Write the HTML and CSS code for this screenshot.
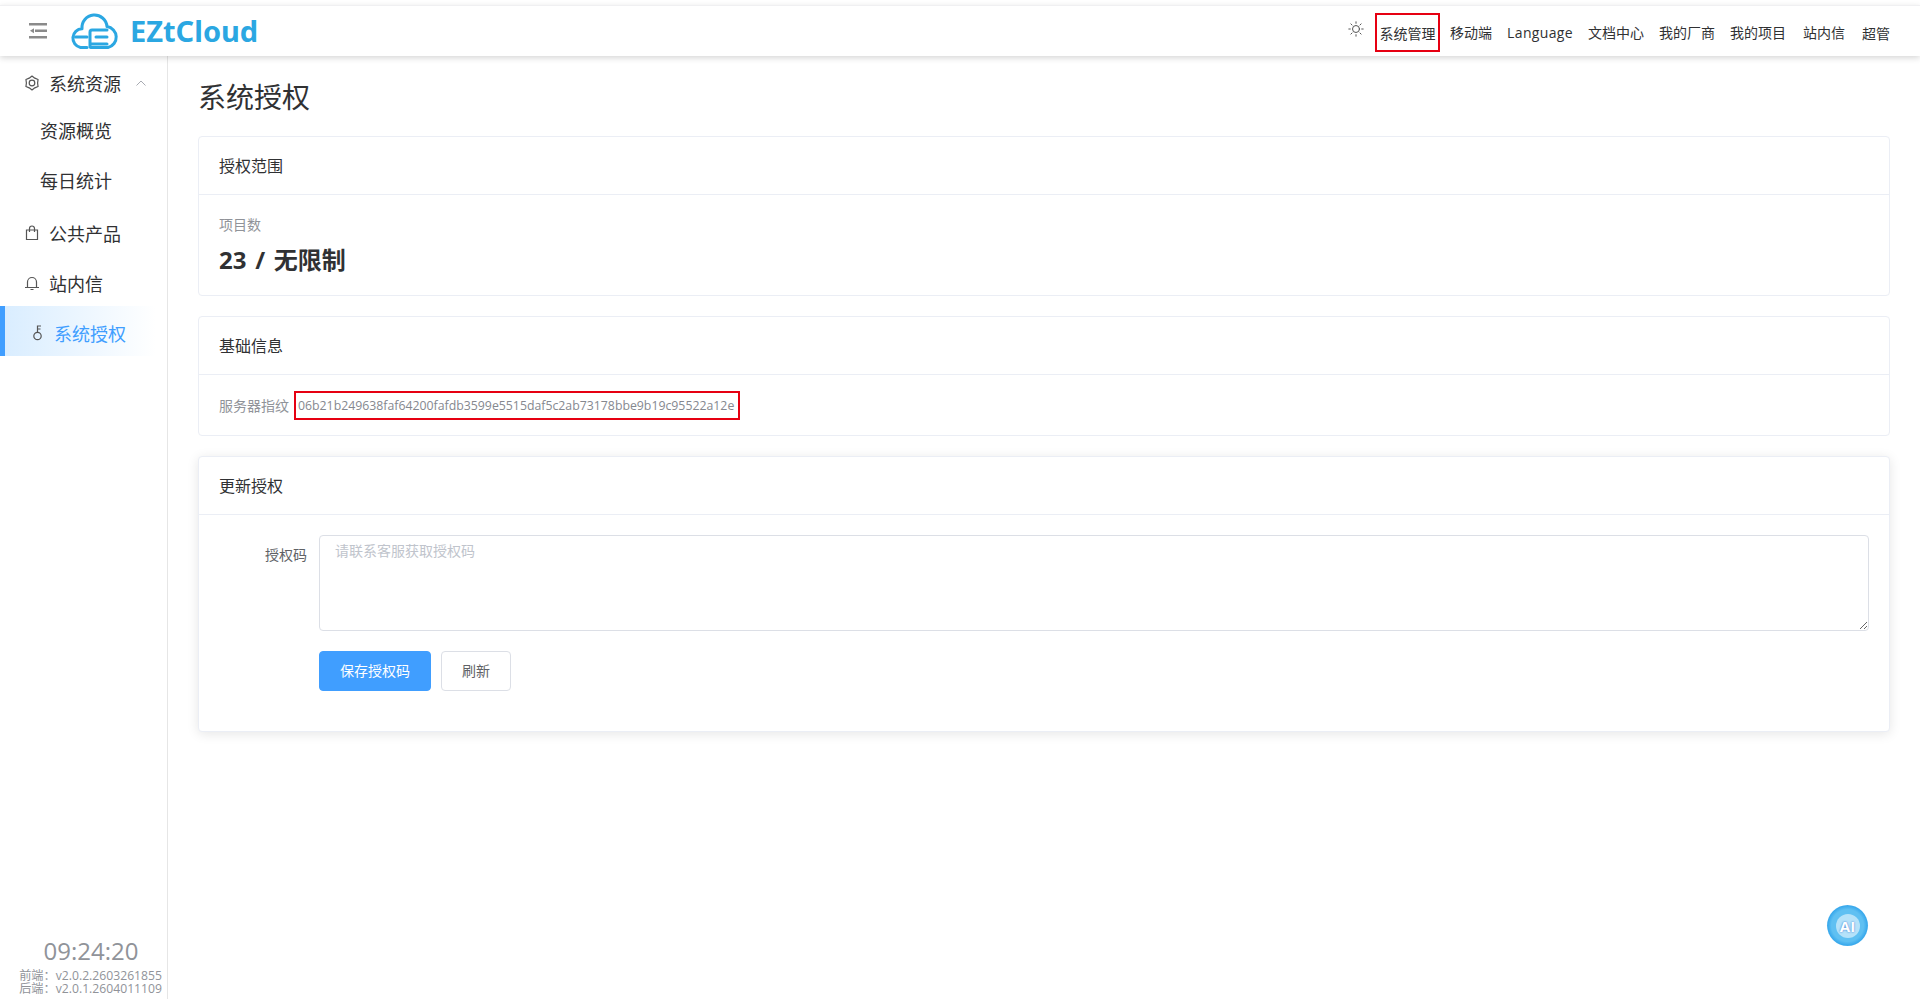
FILE: index.html
```html
<!DOCTYPE html>
<html lang="zh-CN">
<head>
<meta charset="utf-8">
<title>系统授权</title>
<link rel="stylesheet" href="styles.css">
</head>
<body>
<div class="app">
  <header class="topbar">
    <div class="brand">
      <svg class="fold" viewBox="0 0 18 16" width="18" height="16"><path d="M0 0h18v2.600H0zM6 6.500H18v2.600H6zM0 13h18v2.600H0z" fill="#8a8a8a"/><path d="M5 5.300v5L1 7.800z" fill="#8a8a8a"/></svg>
      <svg class="logo" viewBox="0 0 50 38" width="50" height="38" fill="none" stroke="#2ba7e2" stroke-width="3" stroke-linecap="round" stroke-linejoin="round"><path d="M17 35.500H10.500A9.500 9.500 0 0 1 12 16.700A12.500 12.500 0 0 1 37 14.500A10.700 10.700 0 0 1 38 35.500H21"/><path d="M5.500 25H17"/><path d="M20 35V20C20 18.500 21 18 22 18H37M26 25H37M21 32H37"/></svg>
      <span class="brand-name">EZtCloud</span>
    </div>
    <nav class="topnav">
      <svg class="sun" viewBox="0 0 16 16" width="16" height="16" fill="none" stroke="#555" stroke-width="1" stroke-linecap="round"><circle cx="8" cy="8" r="3.500"/><path d="M8 .8v1.500M8 13.700v1.500M.8 8h1.500M13.700 8h1.500M2.900 2.900l1.100 1.100M12 12l1.100 1.100M2.900 13.100 4 12M12 4l1.100-1.100"/></svg>
      <a class="nav-item nav-marked">系统管理</a>
      <a class="nav-item nav-first">移动端</a>
      <a class="nav-item nav-latin">Language</a>
      <a class="nav-item">文档中心</a>
      <a class="nav-item">我的厂商</a>
      <a class="nav-item">我的项目</a>
      <a class="nav-item nav-wide">站内信</a>
      <a class="nav-item nav-wide nav-user">超管</a>
    </nav>
  </header>
  <div class="body">
    <aside class="sidebar">
      <ul class="menu">
        <li class="menu-item">
          <svg class="mi" viewBox="0 0 16 16" width="16" height="16" fill="none" stroke="#555" stroke-width="1.200" stroke-linejoin="round"><path d="M8 1 10.800 3.150 14.060 4.500 13.600 8 14.060 11.500 10.800 12.850 8 15 5.200 12.850 1.940 11.500 2.400 8 1.940 4.500 5.200 3.150Z"/><circle cx="8" cy="8" r="2.800"/></svg>
          <span>系统资源</span>
          <svg class="arrow" viewBox="0 0 10 6" width="10" height="6" fill="none" stroke="#a8abb2" stroke-width="1"><path d="M.5 5.500 5 1l4.500 4.500"/></svg>
        </li>
        <li class="menu-sub">资源概览</li>
        <li class="menu-sub">每日统计</li>
        <li class="menu-item">
          <svg class="mi" viewBox="0 0 16 16" width="16" height="16" fill="none" stroke="#555" stroke-width="1.200"><path d="M2.500 5h11v9.500h-11zM5.500 7V3.500a2.500 2.500 0 0 1 5 0V7"/></svg>
          <span>公共产品</span>
        </li>
        <li class="menu-item">
          <svg class="mi" viewBox="0 0 16 16" width="16" height="16" fill="none" stroke="#555" stroke-width="1.200"><path d="M1 12.500h14M3.500 12.500V7a4.500 4.500 0 0 1 9 0v5.500M6.500 14.500h3"/></svg>
          <span>站内信</span>
        </li>
        <li class="menu-item menu-active">
          <svg class="mi" viewBox="0 0 16 16" width="16" height="16" fill="none" stroke="#555" stroke-width="1.200"><circle cx="7.500" cy="11" r="3.700"/><path d="M7.500 7V1H11M7.500 4H10.500"/></svg>
          <span>系统授权</span>
        </li>
      </ul>
      <div class="side-foot">
        <div class="clock">09:24:20</div>
        <div class="ver">前端：v2.0.2.2603261855</div>
        <div class="ver">后端：v2.0.1.2604011109</div>
      </div>
    </aside>
    <main class="main">
      <h1 class="page-title">系统授权</h1>
      <section class="card">
        <div class="card-head">授权范围</div>
        <div class="card-body stat">
          <div class="stat-label">项目数</div>
          <div class="stat-value">23 / 无限制</div>
        </div>
      </section>
      <section class="card">
        <div class="card-head">基础信息</div>
        <div class="card-body info">
          <span class="info-label">服务器指纹</span>
          <span class="finger">06b21b249638faf64200fafdb3599e5515daf5c2ab73178bbe9b19c95522a12e</span>
        </div>
      </section>
      <section class="card card-raised">
        <div class="card-head">更新授权</div>
        <div class="card-body form">
          <div class="form-row">
            <label class="form-label" for="code">授权码</label>
            <textarea class="code-input" id="code" placeholder="请联系客服获取授权码"></textarea>
          </div>
          <div class="form-actions">
            <button class="btn btn-primary">保存授权码</button>
            <button class="btn">刷新</button>
          </div>
        </div>
      </section>
    </main>
  </div>
  <div class="ai-ball"><span class="ai-core">AI</span></div>
</div>
</body>
</html>
```

FILE: styles.css
```css
* { box-sizing: border-box; }
html, body { margin: 0; height: 100%; }
body {
  font-family: "Open Sans", "Noto Sans CJK SC", sans-serif;
  color: #303133;
  background: #fff;
  overflow: hidden;
}
.app { height: 999px; display: flex; flex-direction: column; position: relative; padding-top: 5px; }
.topbar {
  height: 51px;
  flex: none;
  display: flex;
  justify-content: space-between;
  align-items: center;
  border-top: 1px solid #f0f0f2;
  box-shadow: 0 2px 6px rgba(0, 0, 0, .16);
  position: relative;
  z-index: 2;
  background: #fff;
  padding: 0 30px 0 29px;
}
.brand { display: flex; align-items: center; }
.fold { margin-right: 23px; }
.logo { margin-right: 10px; }
.brand-name { font-size: 29px; font-weight: 700; color: #2ba7e2; line-height: 1; font-family: "Noto Sans", sans-serif; margin-bottom: 1px; }
.topnav { display: flex; align-items: center; font-size: 14px; color: #303133; padding-top: 2px; }
.sun { margin-right: 11px; margin-bottom: 6px; }
.nav-item { margin-left: 15px; white-space: nowrap; }
.nav-marked { border: 2px solid #e60012; padding: 0 2.500px; height: 39px; line-height: 38px; margin-left: 0; }
.nav-first { margin-left: 10px; }
.nav-latin { letter-spacing: .35px; }
.nav-wide { margin-left: 17px; }
.nav-user { padding-top: 2px; }
.body { flex: 1; display: flex; min-height: 0; }
.sidebar {
  width: 168px;
  flex: none;
  border-right: 1px solid #e6e6e6;
  display: flex;
  flex-direction: column;
  justify-content: space-between;
}
.menu { list-style: none; margin: 0; padding: 0; font-size: 18px; color: #303133; }
.menu-item { height: 50px; display: flex; align-items: center; padding: 3px 0 0 24px; gap: 9px; }
.menu-item .arrow { margin-left: 6px; }
.menu-sub { height: 50px; line-height: 51px; padding-left: 40px; }
.menu-active {
  color: #409eff;
  border-left: 5px solid #409eff;
  padding-left: 25px;
  gap: 8px;
  background: linear-gradient(90deg, #d9edff, #fff 93%);
}
.side-foot { text-align: right; padding-right: 5px; color: #909399; padding-bottom: 4px; }
.clock { font-size: 24px; line-height: 30px; text-align: center; padding-left: 20px; margin-bottom: 3px; }
.ver { font-size: 12.200px; line-height: 13px; white-space: nowrap; }
.main { flex: 1; padding: 0 30px; min-width: 0; }
.page-title { margin: 21px 0 19px; font-size: 28px; font-weight: 400; line-height: 40px; color: #303133; }
.card { background: #fff; border: 1px solid #ebeef5; border-radius: 4px; margin-bottom: 20px; }
.card-raised { box-shadow: 0 2px 12px rgba(0, 0, 0, .1); }
.card-head { height: 58px; line-height: 59px; padding: 0 20px; font-size: 16px; border-bottom: 1px solid #ebeef5; }
.card-body { padding: 20px; }
.stat { height: 100px; padding-top: 20px; }
.stat-label { font-size: 14px; line-height: 20px; color: #909399; }
.stat-value { font-size: 24px; line-height: 36px; font-weight: 700; margin-top: 7px; word-spacing: 2.500px; }
.info { display: flex; align-items: center; height: 60px; font-size: 14px; color: #909399; padding: 0 20px; white-space: nowrap; }
.finger { border: 2px solid #e60012; height: 29px; line-height: 25px; padding: 0 2px; margin-left: 5px; width: 446px; font-size: 12.300px; color: #85888f; }
.form { padding: 20px 20px 40px; }
.form-row { display: flex; }
.form-label { width: 100px; padding-right: 12px; text-align: right; font-size: 14px; line-height: 40px; color: #606266; flex: none; }
.code-input {
  flex: 1;
  height: 96px;
  border: 1px solid #dcdfe6;
  border-radius: 4px;
  padding: 4px 15px;
  font: inherit;
  font-size: 14px;
  line-height: 22px;
  outline: 0;
  resize: vertical;
}
.code-input::placeholder { color: #c0c4cc; }
.form-actions { margin: 20px 0 0 100px; display: flex; gap: 10px; }
.btn {
  height: 40px;
  padding: 0 20px 2px;
  background: #fff;
  border: 1px solid #dcdfe6;
  border-radius: 4px;
  font-family: inherit;
  font-size: 14px;
  color: #606266;
}
.btn-primary { background: #409eff; border-color: #409eff; color: #fff; }
.ai-ball {
  position: absolute;
  left: 1827px;
  top: 905px;
  width: 41px;
  height: 41px;
  border-radius: 50%;
  background: radial-gradient(circle at 50% 50%, #5fc0f2 0 55%, #3aa9ec 68%, #9fdcf8 82%, #dbe8fc 100%);
  display: flex;
  align-items: center;
  justify-content: center;
}
.ai-core {
  width: 24px;
  height: 24px;
  border-radius: 50%;
  background: #b5e2f9;
  color: #fff;
  font-size: 15px;
  font-weight: 700;
  line-height: 24px;
  text-align: center;
  text-shadow: 0 0 2px #2f6fd0;
}
```
